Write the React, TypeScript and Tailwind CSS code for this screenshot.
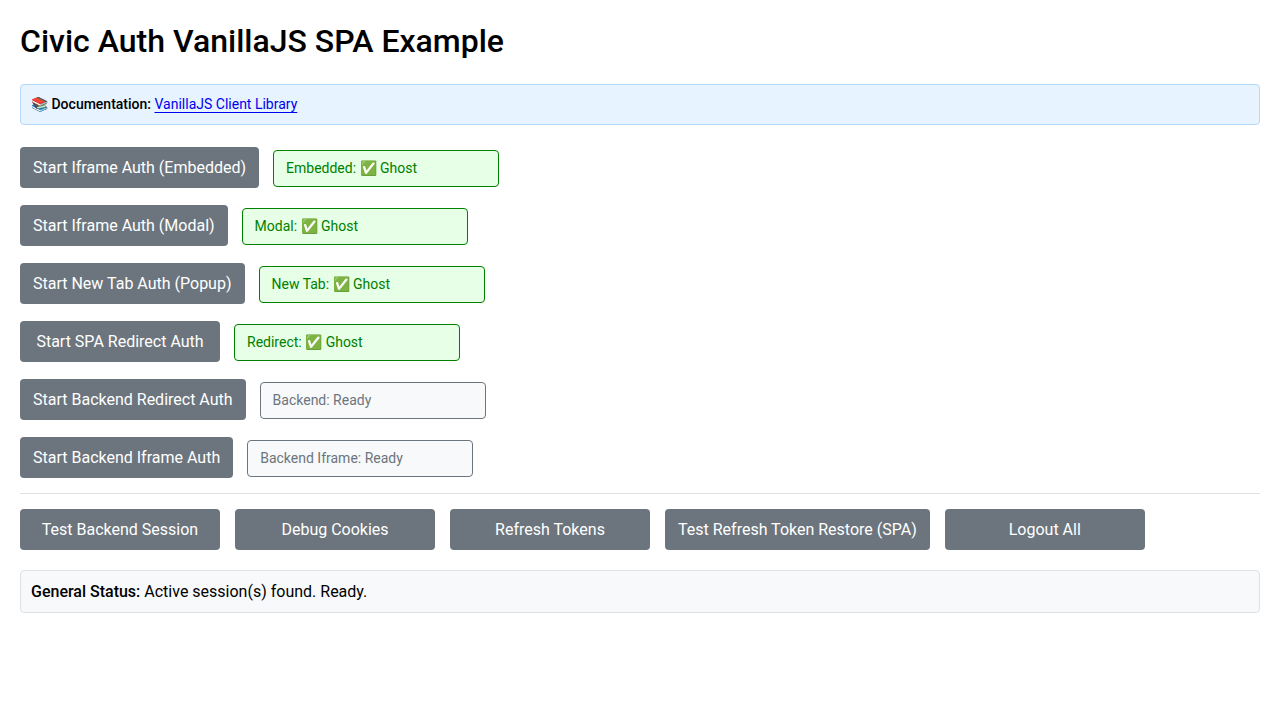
const flows = [
  { action: 'Start Iframe Auth (Embedded)', status: 'Embedded: ✅ Ghost', ok: true },
  { action: 'Start Iframe Auth (Modal)', status: 'Modal: ✅ Ghost', ok: true },
  { action: 'Start New Tab Auth (Popup)', status: 'New Tab: ✅ Ghost', ok: true },
  { action: 'Start SPA Redirect Auth', status: 'Redirect: ✅ Ghost', ok: true },
  { action: 'Start Backend Redirect Auth', status: 'Backend: Ready', ok: false },
  { action: 'Start Backend Iframe Auth', status: 'Backend Iframe: Ready', ok: false },
];

const tools = [
  'Test Backend Session',
  'Debug Cookies',
  'Refresh Tokens',
  'Test Refresh Token Restore (SPA)',
  'Logout All',
];

function ActionButton({ label }: { label: string }) {
  return (
    <button
      type="button"
      className="min-w-[200px] cursor-pointer rounded bg-[#6c757d] px-[13px] pt-[9px] pb-2 text-base text-white"
    >
      {label}
    </button>
  );
}

function FlowStatus({ label, ok }: { label: string; ok: boolean }) {
  const tone = ok
    ? 'border-[#008000] bg-[#e6ffe6] text-[#008000]'
    : 'border-[#6c757d] bg-[#f8f9fa] text-[#6c757d]';
  return (
    <span className={`min-w-[226px] rounded border px-3 py-2 text-sm leading-[19px] ${tone}`}>
      {label}
    </span>
  );
}

export default function App() {
  return (
    <main className="p-5 font-[Roboto,sans-serif] text-base text-black">
      <h1 className="mb-[21px] text-[32px] leading-[43px] font-medium">Civic Auth VanillaJS SPA Example</h1>

      <div className="mb-[22px] rounded border border-[#b3d9ff] bg-[#e7f3ff] p-2.5 text-sm leading-[19px]">
        📚 <strong className="font-medium">Documentation:</strong>{' '}
        <a href="#docs" className="text-[#0000ee] underline underline-offset-[3px]">
          VanillaJS Client Library
        </a>
      </div>

      <div className="flex flex-col gap-[17px]">
        {flows.map((flow) => (
          <div key={flow.action} className="flex items-baseline gap-[14px]">
            <ActionButton label={flow.action} />
            <FlowStatus label={flow.status} ok={flow.ok} />
          </div>
        ))}
      </div>

      <hr className="my-[15px] border-[#dee2e6]" />

      <div className="mb-5 flex flex-wrap gap-[15px]">
        {tools.map((tool) => (
          <ActionButton key={tool} label={tool} />
        ))}
      </div>

      <div className="rounded border border-[#dee2e6] bg-[#f8f9fa] p-2.5 leading-[21px]">
        <strong className="font-medium">General Status:</strong> Active session(s) found. Ready.
      </div>
    </main>
  );
}
